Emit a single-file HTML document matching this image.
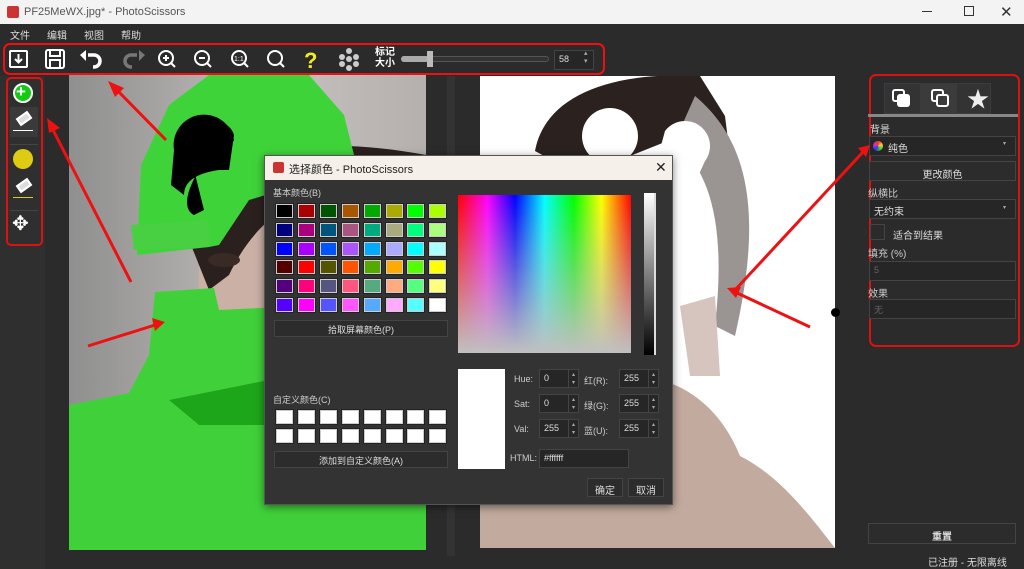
<!DOCTYPE html>
<html><head><meta charset="utf-8"><style>
*{box-sizing:border-box;margin:0;padding:0}
body{width:1024px;height:569px;overflow:hidden;background:#2b2b2b;font-family:"Liberation Sans","Noto Sans CJK SC",sans-serif;font-size:10px;color:#ddd;position:relative}
.a{position:absolute}
.btn{position:absolute;background:#2c2c2c;border:1px solid #444;color:#ddd;text-align:center;font-size:10px}
.sw{position:absolute;width:17px;height:14px;border:1px solid #ccc;outline:1px solid #222}
.fld{position:absolute;background:#262626;border:1px solid #444;color:#ddd;font-size:9px;padding:3px 0 0 4px;height:19px}
.sp{position:absolute;width:10px;height:19px;color:#aaa;font-size:6px;line-height:8px;border-left:1px solid #444;text-align:center;padding-top:2px}
.lbl{position:absolute;font-size:9px;color:#ccc}
</style></head><body>
<div class="a" style="left:0;top:0;width:1024px;height:24px;background:#f3f3f3;color:#555;font-size:11px">
 <div class="a" style="left:7px;top:6px;width:12px;height:12px;background:#c33;border-radius:2px"></div>
 <div class="a" style="left:24px;top:6px">PF25MeWX.jpg* - PhotoScissors</div>
 <div class="a" style="left:922px;top:11px;width:10px;height:1px;background:#333"></div>
 <div class="a" style="left:964px;top:6px;width:10px;height:10px;border:1px solid #333"></div>
 <div class="a" style="left:1000px;top:3px;font-size:15px;color:#333">✕</div>
</div>
<div class="a" style="left:0;top:24px;width:1024px;height:18px;background:#2b2b2b;font-size:10px;color:#ddd">
 <span class="a" style="left:10px;top:3px">文件</span><span class="a" style="left:47px;top:3px">编辑</span><span class="a" style="left:84px;top:3px">视图</span><span class="a" style="left:121px;top:3px">帮助</span>
</div>
<div class="a" style="left:0;top:42px;width:1024px;height:34px;background:#2b2b2b"></div>
<div class="a" style="left:3px;top:43px;width:602px;height:32px;border:2px solid #e11;border-radius:7px"></div>
<svg class="a" style="left:0;top:42px" width="420" height="34" viewBox="0 0 420 34">
 <g fill="none" stroke="#fff" stroke-width="2">
 <rect x="10" y="9" width="17" height="16" rx="1"/><path d="M18.5 12v8M15 17l3.5 3.5 3.5-3.5"/>
 <rect x="46" y="8" width="18" height="18" rx="2"/><rect x="50" y="8" width="10" height="6"/><rect x="50" y="18" width="10" height="8"/>
 <path d="M88 13 h6 a6 6 0 0 1 0 12 h-1" stroke-width="3.5"/>
 <path d="M137 13 h-6 a6 6 0 0 0 0 12 h1" stroke="#777" stroke-width="3.5"/>
 <circle cx="166" cy="16" r="7"/><path d="M171 21l4 4M163 16h6M166 13v6"/>
 <circle cx="202" cy="16" r="7"/><path d="M207 21l4 4M199 16h6"/>
 <circle cx="239" cy="16" r="7"/><path d="M244 21l4 4"/>
 <circle cx="275" cy="16" r="7"/><path d="M280 21l4 4"/>
 </g>
 <text x="234" y="19" font-size="7" fill="#fff" font-family="Liberation Sans">1:1</text>
 <polygon points="86,8 86,19 80,13" fill="#fff"/>
 <polygon points="139,8 139,19 145,13" fill="#777"/>
 <text x="304" y="26" font-size="22" font-weight="bold" fill="#ee2" font-family="Liberation Sans">?</text>
 <g fill="#ccc"><circle cx="349" cy="9" r="3"/><circle cx="342" cy="15" r="3"/><circle cx="356" cy="15" r="3"/><circle cx="349" cy="17" r="3"/><circle cx="342" cy="22" r="3"/><circle cx="356" cy="22" r="3"/><circle cx="349" cy="26" r="3"/></g>
</svg>
<div class="a" style="left:375px;top:47px;font-size:10px;font-weight:bold;color:#fff;line-height:11px">标记<br>大小</div>
<div class="a" style="left:401px;top:56px;width:148px;height:6px;background:#333;border:1px solid #555;border-radius:3px"></div>
<div class="a" style="left:401px;top:56px;width:28px;height:6px;background:#aaa;border-radius:3px"></div>
<div class="a" style="left:427px;top:51px;width:6px;height:16px;background:#bbb"></div>
<div class="fld" style="left:554px;top:50px;width:40px;height:20px">58</div>
<div class="a" style="left:584px;top:50px;width:10px;height:20px;color:#aaa;font-size:7px;line-height:8px">▴<br>▾</div>
<div class="a" style="left:0;top:76px;width:45px;height:493px;background:#2f2f2f"></div>
<div class="a" style="left:6px;top:77px;width:37px;height:169px;border:2px solid #d11;border-radius:5px"></div>
<div class="a" style="left:10px;top:107px;width:28px;height:30px;background:#3a3a3a"></div>
<div class="a" style="left:13px;top:83px;width:20px;height:20px;border-radius:50%;background:#1c1;border:2px solid #fff"></div>
<div class="a" style="left:16px;top:82px;color:#fff;font-size:17px;font-weight:bold">+</div>
<div class="a" style="left:17px;top:114px;width:14px;height:9px;border:2px solid #fff;transform:rotate(-35deg);background:#ddd"></div>
<div class="a" style="left:13px;top:130px;width:20px;height:1px;background:#fff"></div>
<div class="a" style="left:10px;top:144px;width:28px;height:1px;background:#444"></div>
<div class="a" style="left:13px;top:149px;width:20px;height:20px;border-radius:50%;background:#dc1"></div>
<div class="a" style="left:17px;top:181px;width:14px;height:9px;border:2px solid #fff;transform:rotate(-35deg);background:#ddd"></div>
<div class="a" style="left:13px;top:197px;width:20px;height:1px;background:#dc1"></div>
<div class="a" style="left:10px;top:210px;width:28px;height:1px;background:#444"></div>
<div class="a" style="left:12px;top:211px;color:#fff;font-size:20px">✥</div>
<!-- left image -->
<div class="a" style="left:69px;top:75px;width:357px;height:475px;background:linear-gradient(90deg,#8f8f8f,#b3b0ae 40%,#c0bcba 70%,#b5b0ad);overflow:hidden">
 <svg width="357" height="475">
  <path d="M130 100 L357 80 L357 320 L130 320 Z" fill="#cbb0a5"/>
  <path d="M110 140 C150 70 250 60 357 80 L357 115 C280 95 200 115 160 200 L140 215 Z" fill="#2a201e"/>
  <path d="M68 180 L72 90 L100 30 L140 0 L240 0 L275 40 L285 80 L270 105 L230 110 L180 125 L150 170 L140 172 Z" fill="#3fd33a"/>
  <path d="M62 150 L140 145 L140 172 L65 175 Z" fill="#48cf42"/>
  <path d="M115 55 C130 40 160 42 165 60 L160 95 L130 95 C115 120 115 135 125 140 L135 135 Z" fill="#000"/>
  <path d="M105 75 a30 30 0 0 1 60 -10 L150 95 Q115 100 115 120 L102 110 Z" fill="#000"/>
  <ellipse cx="155" cy="185" rx="16" ry="7" fill="#3a2a26"/>
  <path d="M86 217 L145 213 L150 235 L357 225 L357 475 L0 475 L0 330 L60 318 L80 280 Z" fill="#40d13a"/>
  <path d="M100 325 L200 305 L357 285 L357 305 L250 350 L130 350 Z" fill="#1ea61b"/>
 </svg>
</div>
<div class="a" style="left:447px;top:76px;width:8px;height:480px;background:#333"></div>
<!-- right image -->
<div class="a" style="left:480px;top:76px;width:355px;height:472px;background:#fff;overflow:hidden">
 <svg width="355" height="472">
  <path d="M55 75 C65 20 130 -5 220 0 L245 40 L255 120 L235 110 L200 60 L150 80 L110 105 Z" fill="#2b2220"/>
  <path d="M215 20 C275 70 280 150 255 260 L235 250 C245 160 235 100 195 65 Z" fill="#9a9593"/>
  <circle cx="130" cy="60" r="28" fill="#fff"/>
  <path d="M185 55 a25 25 0 0 1 40 30 L200 140 L170 110 Z" fill="#fff"/>
  <path d="M200 230 L235 220 L240 300 L210 300 Z" fill="#d6c5be"/>
  <path d="M150 300 C200 300 240 330 260 380 C300 400 330 440 355 472 L0 472 L0 420 C60 380 100 330 150 300 Z" fill="#c2aa9e"/>
 </svg>
</div>
<div class="a" style="left:831px;top:308px;width:9px;height:9px;border-radius:50%;background:#000"></div>
<!-- right panel -->
<div class="a" style="left:860px;top:76px;width:164px;height:470px;background:#2b2b2b"></div>
<div class="a" style="left:869px;top:74px;width:151px;height:273px;border:2px solid #d11;border-radius:7px"></div>
<div class="a" style="left:884px;top:83px;width:107px;height:31px;background:#333;border:1px solid #3c3c3c"></div>
<div class="a" style="left:920px;top:83px;width:37px;height:31px;background:#3b3b3b"></div>
<div class="a" style="left:892px;top:89px;width:13px;height:13px;border:2px solid #fff;border-radius:3px"></div>
<div class="a" style="left:897px;top:94px;width:13px;height:13px;background:#fff;border-radius:3px"></div>
<div class="a" style="left:931px;top:89px;width:13px;height:13px;border:2px solid #fff;border-radius:3px"></div>
<div class="a" style="left:936px;top:94px;width:13px;height:13px;border:2px solid #fff;border-radius:3px;background:#3b3b3b"></div>
<div class="a" style="left:967px;top:82px;font-size:22px;color:#eee">★</div>
<div class="a" style="left:868px;top:114px;width:150px;height:3px;background:#888"></div>
<div class="lbl" style="left:870px;top:121px;font-size:10px;color:#ddd">背景</div>
<div class="fld" style="left:869px;top:136px;width:147px;height:20px;font-size:10px;padding-left:18px">纯色</div>
<div class="a" style="left:873px;top:141px;width:10px;height:10px;border-radius:50%;background:conic-gradient(#e33,#fc3,#3c3,#33f,#c3c,#e33)"></div>
<div class="a" style="left:1003px;top:140px;font-size:6px;color:#aaa">▾</div>
<div class="btn" style="left:869px;top:161px;width:147px;height:20px;padding-top:4px">更改颜色</div>
<div class="lbl" style="left:868px;top:185px;font-size:10px">纵横比</div>
<div class="fld" style="left:869px;top:199px;width:147px;height:20px;font-size:10px">无约束</div>
<div class="a" style="left:1003px;top:204px;font-size:6px;color:#aaa">▾</div>
<div class="a" style="left:870px;top:224px;width:15px;height:16px;border:1px solid #444"></div>
<div class="lbl" style="left:893px;top:227px;font-size:10px;color:#ddd">适合到结果</div>
<div class="lbl" style="left:868px;top:245px;font-size:10px">填充 (%)</div>
<div class="fld" style="left:869px;top:261px;width:147px;height:20px;color:#666">5</div>
<div class="lbl" style="left:868px;top:285px;font-size:10px">效果</div>
<div class="fld" style="left:869px;top:299px;width:147px;height:20px;color:#666">无</div>
<div class="btn" style="left:868px;top:523px;width:148px;height:21px;padding-top:4px;font-weight:bold">重置</div>
<div class="a" style="left:928px;top:554px;font-size:10px;color:#ddd">已注册 - 无限离线</div>
<svg class="a" style="left:0;top:0" width="1024" height="569">
 <g stroke="#e11" stroke-width="3" fill="#e11">
  <line x1="166" y1="140" x2="115" y2="88"/><polygon points="108,81 124,88 115,97" stroke="none"/>
  <line x1="131" y1="282" x2="52" y2="128"/><polygon points="47,118 60,128 49,133" stroke="none"/>
  <line x1="88" y1="346" x2="155" y2="325"/><polygon points="165,322 152,318 155,331" stroke="none"/>
  <line x1="810" y1="327" x2="735" y2="292"/><polygon points="727,288 741,287 736,298" stroke="none"/>
  <line x1="735" y1="290" x2="863" y2="152"/><polygon points="870,145 858,148 866,157" stroke="none"/>
 </g>
</svg>
<!-- dialog -->
<div class="a" style="left:264px;top:155px;width:409px;height:350px;background:#333;border:1px solid #555;box-shadow:0 2px 8px rgba(0,0,0,.5)">
 <div class="a" style="left:0;top:0;width:407px;height:24px;background:#f5f1ea;color:#222;font-size:11px">
  <div class="a" style="left:8px;top:6px;width:11px;height:11px;background:#c33;border-radius:2px"></div>
  <div class="a" style="left:24px;top:5px">选择颜色 - PhotoScissors</div>
  <div class="a" style="left:390px;top:3px;font-size:14px">✕</div>
 </div>
 <div class="lbl" style="left:8px;top:30px">基本颜色(B)</div>
</div>
<div id="sw"></div>
<div class="btn" style="left:274px;top:320px;width:174px;height:17px;padding-top:2px;font-size:9px">拾取屏幕颜色(P)</div>
<div class="lbl" style="left:273px;top:393px">自定义颜色(C)</div>
<div class="btn" style="left:274px;top:451px;width:174px;height:17px;padding-top:2px;font-size:9px">添加到自定义颜色(A)</div>
<div class="a" style="left:458px;top:195px;width:173px;height:158px;background:linear-gradient(180deg,rgba(192,192,192,0),#c0c0c0),linear-gradient(90deg,#f00,#f0f 17%,#00f 33%,#0ff 50%,#0f0 67%,#ff0 83%,#f00)"></div>
<div class="a" style="left:644px;top:193px;width:12px;height:162px;background:linear-gradient(#fff,#000);border-right:2px solid #ddd"></div>
<div class="a" style="left:458px;top:369px;width:47px;height:100px;background:#fff"></div>
<div class="lbl" style="left:514px;top:374px">Hue:</div><div class="fld" style="left:539px;top:369px;width:40px">0</div><div class="sp" style="left:568px;top:369px">▴<br>▾</div>
<div class="lbl" style="left:514px;top:399px">Sat:</div><div class="fld" style="left:539px;top:394px;width:40px">0</div><div class="sp" style="left:568px;top:394px">▴<br>▾</div>
<div class="lbl" style="left:514px;top:424px">Val:</div><div class="fld" style="left:539px;top:419px;width:40px">255</div><div class="sp" style="left:568px;top:419px">▴<br>▾</div>
<div class="lbl" style="left:584px;top:374px">红(R):</div><div class="fld" style="left:619px;top:369px;width:40px">255</div><div class="sp" style="left:648px;top:369px">▴<br>▾</div>
<div class="lbl" style="left:584px;top:399px">绿(G):</div><div class="fld" style="left:619px;top:394px;width:40px">255</div><div class="sp" style="left:648px;top:394px">▴<br>▾</div>
<div class="lbl" style="left:584px;top:424px">蓝(U):</div><div class="fld" style="left:619px;top:419px;width:40px">255</div><div class="sp" style="left:648px;top:419px">▴<br>▾</div>
<div class="lbl" style="left:510px;top:453px">HTML:</div><div class="fld" style="left:539px;top:449px;width:90px">#ffffff</div>
<div class="btn" style="left:587px;top:478px;width:36px;height:19px;padding-top:3px">确定</div>
<div class="btn" style="left:628px;top:478px;width:36px;height:19px;padding-top:3px">取消</div>
<script>
var c=["000000","aa0000","005500","aa5500","00aa00","aaaa00","00ff00","aaff00","00007f","aa007f","00557f","aa557f","00aa7f","aaaa7f","00ff7f","aaff7f","0000ff","aa00ff","0055ff","aa55ff","00aaff","aaaaff","00ffff","aaffff","550000","ff0000","555500","ff5500","55aa00","ffaa00","55ff00","ffff00","55007f","ff007f","55557f","ff557f","55aa7f","ffaa7f","55ff7f","ffff7f","5500ff","ff00ff","5555ff","ff55ff","55aaff","ffaaff","55ffff","ffffff"];
var h="";for(var i=0;i<48;i++){h+='<div class="sw" style="left:'+(276+(i%8)*21.9)+'px;top:'+(204+Math.floor(i/8)*18.8)+'px;background:#'+c[i]+'"></div>';}
for(var i=0;i<16;i++){h+='<div class="sw" style="left:'+(276+(i%8)*21.9)+'px;top:'+(410+Math.floor(i/8)*19)+'px;background:#fff"></div>';}
document.getElementById("sw").innerHTML=h;
</script>
</body></html>
